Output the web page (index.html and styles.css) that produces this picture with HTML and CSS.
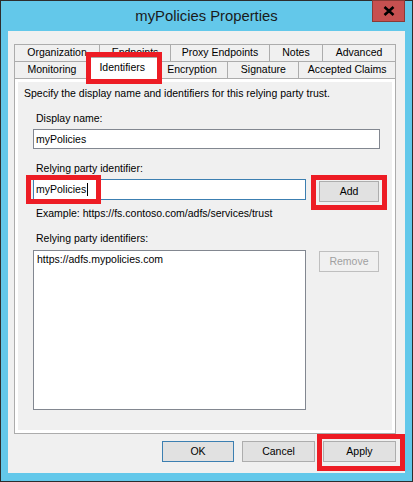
FILE: index.html
```html
<!DOCTYPE html>
<html lang="en">
<head>
	<meta charset="utf-8">
	<title>myPolicies Properties</title>
	<link rel="stylesheet" href="styles.css">
</head>
<body>
<div id="window">
	<div class="titlebar">
		<span></span>
		<h1>myPolicies Properties</h1>
		<div class="close">
			<svg width="12" height="10" viewBox="0 0 12 10"><path d="M1.5 1 L10.5 9 M10.5 1 L1.5 9" stroke="#000" stroke-width="2.6" fill="none"/></svg>
		</div>
	</div>

	<div class="client">
		<div class="tabrow">
			<div class="tab w85">Organization</div>
			<div class="tab w71">Endpoints</div>
			<div class="tab w99">Proxy Endpoints</div>
			<div class="tab w53">Notes</div>
			<div class="tab w73 last">Advanced</div>
		</div>
		<div class="tabrow">
			<div class="tab w75">Monitoring</div>
			<div class="tab selected">Identifiers</div>
			<div class="tab w72">Encryption</div>
			<div class="tab w71">Signature</div>
			<div class="tab w97 last">Accepted Claims</div>
		</div>

		<div class="panel">
			<div class="page">
				<p class="desc">Specify the display name and identifiers for this relying party trust.</p>
				<div class="form">
					<label class="first">Display name:</label>
					<div class="txt wide">myPolicies</div>

					<label class="second">Relying party identifier:</label>
					<div class="row">
						<div class="txt narrow focus">myPolicies<span class="caret"></span></div>
						<div class="btn side">Add</div>
					</div>
					<p class="example">Example: https://fs.contoso.com/adfs/services/trust</p>

					<label class="third">Relying party identifiers:</label>
					<div class="row list-row">
						<div class="list">https://adfs.mypolicies.com</div>
						<div class="btn side disabled">Remove</div>
					</div>
				</div>
			</div>
		</div>

		<div class="buttons">
			<div class="btn default w72">OK</div>
			<div class="btn w73">Cancel</div>
			<div class="btn w73">Apply</div>
		</div>
	</div>

	<!-- red annotation boxes drawn over the screenshot -->
	<div class="mark m-tab"></div>
	<div class="mark m-id"></div>
	<div class="mark m-add"></div>
	<div class="mark m-apply"></div>
</div>
</body>
</html>
```

FILE: styles.css
```css
html, body { margin: 0; padding: 0; }
body {
	font-family: "Liberation Sans", Arial, sans-serif;
	font-size: 10.5px;
	color: black;
	background-color: white;
}
#window {
	position: relative;
	width: 413px;
	height: 482px;
	box-sizing: border-box;
	border: solid 1px #2d2d2d;
	background-color: #63c8ea;
}
.titlebar {
	display: grid;
	grid-template-columns: 1fr auto 1fr;
	height: 30px;
	align-items: center;
}
.titlebar h1 {
	margin: 0;
	font-size: 14.8px;
	font-weight: normal;
	color: #1a1a1a;
	line-height: 30px;
}
.close {
	justify-self: end;
	align-self: start;
	margin: -1px 7px 0 0;
	width: 33px;
	height: 22px;
	box-sizing: border-box;
	border: solid 1px #8a3a36;
	background-color: #c75050;
	display: flex;
	align-items: center;
	justify-content: center;
}
.client {
	margin: 0 7px;
	height: 442px;
	box-sizing: border-box;
	padding: 13px 9px 0 6px;
	background-color: #f0f0f0;
}

/* tabs */
.tabrow { display: flex; height: 17px; }
.tab {
	height: 17px;
	box-sizing: border-box;
	border-top: solid 1px #acacac;
	border-left: solid 1px #acacac;
	background-color: #f0f0f0;
	text-align: center;
	line-height: 15px;
}
.tab.last { border-right: solid 1px #acacac; }
.tab.selected {
	position: relative;
	z-index: 2;
	width: 71px;
	height: 22px;
	margin: -4px -2px -1px;
	border-right: solid 1px #acacac;
	background-color: white;
	line-height: 19px;
}
.w53 { width: 53px; }
.w71 { width: 71px; }
.w72 { width: 72px; }
.w73 { width: 73px; }
.w75 { width: 75px; }
.w85 { width: 85px; }
.w97 { width: 97px; }
.w99 { width: 99px; }
.tab.w73.last { width: 74px; }
.tab.w97.last { width: 98px; }

.panel {
	border: solid 1px #acacac;
	padding: 3px;
	background-color: white;
}
.page {
	height: 348px;
	box-sizing: border-box;
	padding: 5px 0 0 6px;
	background-color: #f0f0f0;
}
.desc { margin: 0; line-height: 13px; }
.form { margin-left: 9px; }
label { display: block; padding-left: 3px; line-height: 13px; }
label.first { margin-top: 12px; }
label.second { margin-top: 13px; }
label.third { margin-top: 12px; }
.example { margin: 5px 0 0; padding-left: 3px; line-height: 13px; }

.txt {
	margin-top: 4px;
	height: 20px;
	box-sizing: border-box;
	border: solid 1px #828790;
	background-color: white;
	padding: 0 2px;
	line-height: 18px;
}
.txt.wide { width: 347px; }
.txt.narrow { width: 273px; height: 21px; margin-top: 0; line-height: 19px; }
.txt.focus { border-color: #3c7fb1; }
.caret {
	display: inline-block;
	width: 1px;
	height: 13px;
	margin-left: 1px;
	vertical-align: -3px;
	background-color: black;
}
.row { display: flex; gap: 13px; align-items: flex-start; margin-top: 4px; }
.list-row { margin-top: 5px; }
.list {
	width: 273px;
	height: 160px;
	box-sizing: border-box;
	border: solid 1px #828790;
	background-color: white;
	padding: 2px 3px;
	line-height: 13px;
}

/* buttons */
.btn {
	height: 21px;
	box-sizing: border-box;
	border: solid 1px #adadad;
	background-color: #e1e1e1;
	text-align: center;
	line-height: 19px;
}
.btn.side { width: 60px; margin-top: 2px; }
.btn.disabled {
	margin-top: 1px;
	border-color: #bfbfbf;
	background-color: #f0f0f0;
	color: #a0a0a0;
}
.btn.default { border-color: #3c7fb1; }
.buttons {
	display: flex;
	justify-content: flex-end;
	gap: 8px;
	margin-top: 7px;
}

/* annotation */
.mark {
	position: absolute;
	box-sizing: border-box;
	border: solid 5px #ed1c24;
	z-index: 5;
}
.m-tab { left: 85px; top: 51px; width: 76px; height: 32px; }
.m-id { left: 25px; top: 174px; width: 75px; height: 29px; }
.m-add { left: 310px; top: 174px; width: 76px; height: 35px; }
.m-apply { left: 316px; top: 433px; width: 88px; height: 37px; }
```
